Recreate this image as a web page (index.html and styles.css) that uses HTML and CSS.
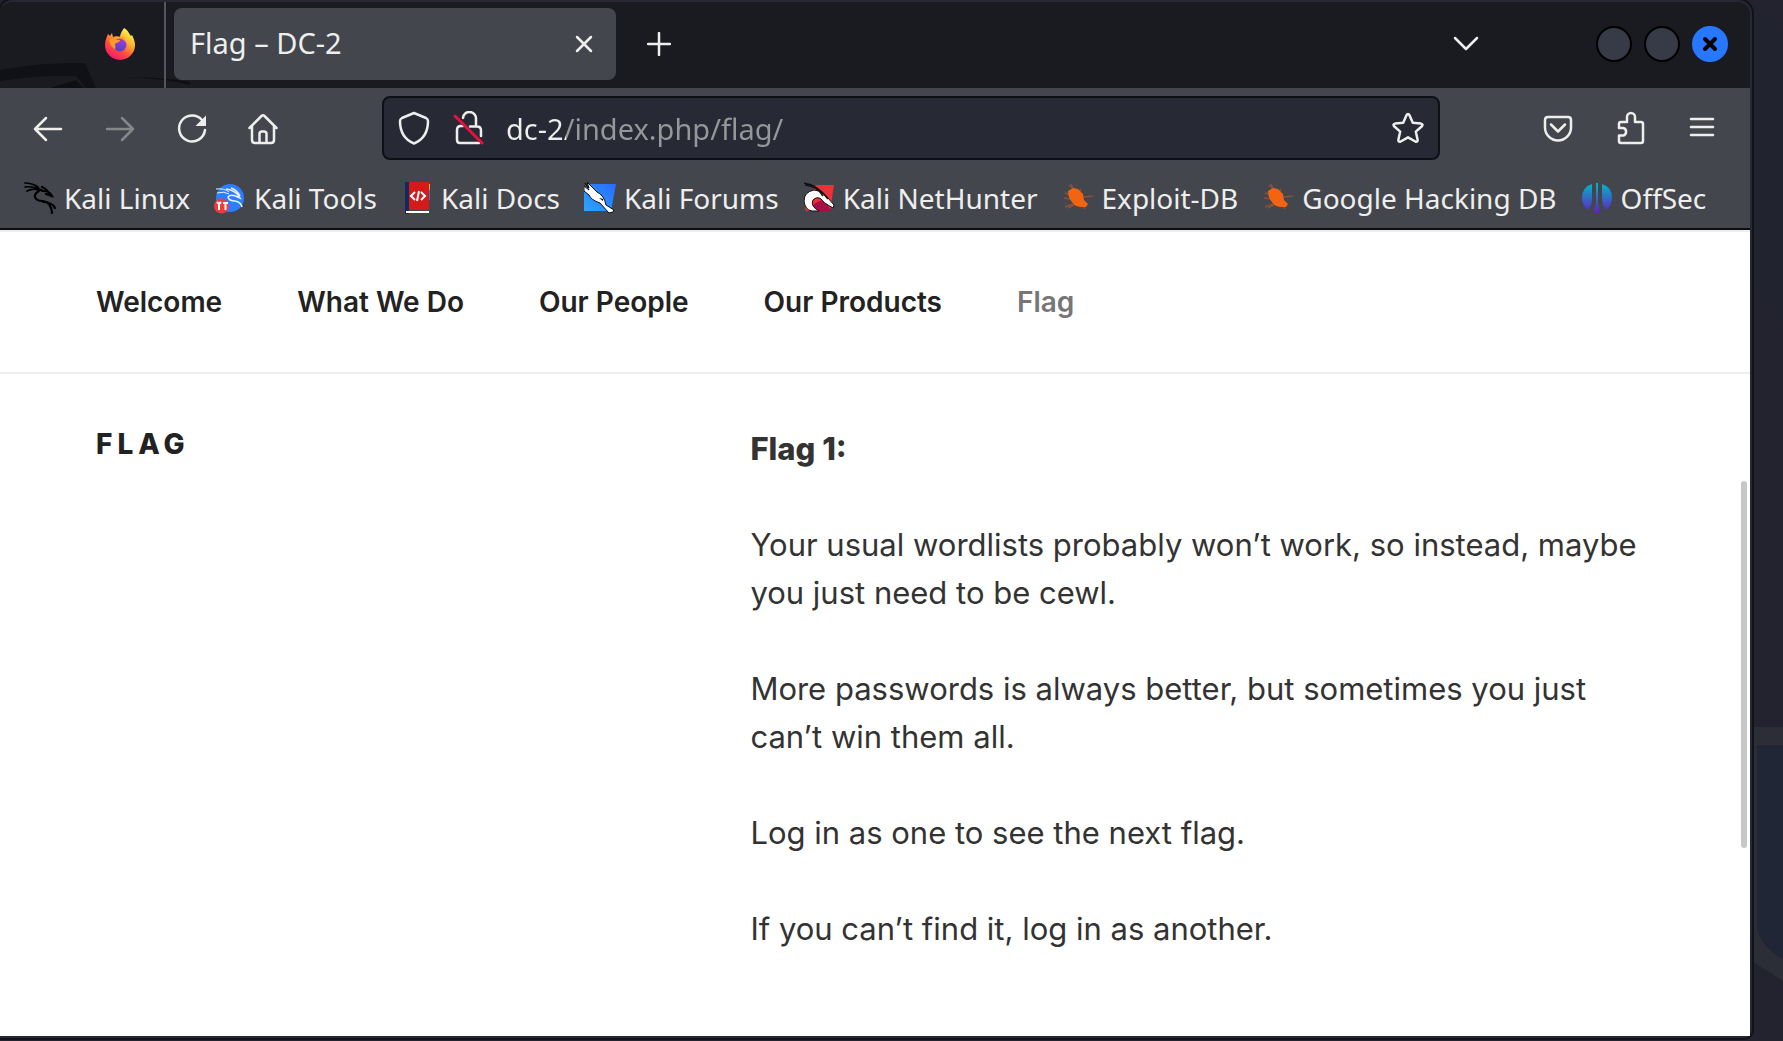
FILE: index.html
```html
<!DOCTYPE html>
<html lang="en">
<head>
<meta charset="utf-8">
<title>Flag – DC-2</title>
<link rel="stylesheet" href="styles.css">
</head>
<body>
<svg class="wallpaper" viewBox="0 0 60 1041" aria-hidden="true">
  <path d="M24 0 60 30V330L24 250z" fill="#21232f"/>
  <path d="M30 727H60V745H34V930Q42 950 60 959V981L30 962z" fill="#2b2d37"/>
  <path d="M34 746H60V958Q42 950 34 930z" fill="#212637"/>
</svg>
<div class="window">
  <header class="titlebar">
    <svg class="titlebar-art" viewBox="0 0 190 28" aria-hidden="true">
      <path d="M0 10Q40 2 85 3L96 28H86L76 16Q40 15 0 21z" fill="#101116"/>
      <path d="M50 28 76 20 84 28zM125 17Q180 17 214 28H200Q175 19 125 17z" fill="#0e0f13"/>
    </svg>
    <div class="pinned">
      <svg class="firefox" width="30" height="32" viewBox="0 0 30 32" role="img" aria-label="Firefox">
        <defs>
          <linearGradient id="flame" x1=".85" y1=".1" x2=".3" y2="1">
            <stop offset="0" stop-color="#fff44f"/><stop offset=".35" stop-color="#ffb02e"/>
            <stop offset=".65" stop-color="#ff4f3c"/><stop offset="1" stop-color="#f5156c"/>
          </linearGradient>
          <linearGradient id="globe" x1=".7" y1="0" x2=".3" y2="1">
            <stop offset="0" stop-color="#a63bd8"/><stop offset="1" stop-color="#4c41c9"/>
          </linearGradient>
        </defs>
        <path d="M19 0c5 3 5 6 7 8l1-1c2 4 3 7 3 10a15 15 0 0 1-30 0C0 12 2 9 3 6l2 2 2-3 1 4c2-1 5-1 7 0 0-3 2-6 4-9z" fill="url(#flame)"/>
        <circle cx="15" cy="17" r="6.500" fill="url(#globe)"/>
        <path d="M12 9c4-1 8 0 8 4l-3-2zM4 12c3-2 6-1 8 0h3c0 3-4 2-5 4 0 2 1 3 0 5-3-1-5-5-6-9z" fill="#ff9a23"/>
      </svg>
    </div>
    <div class="tab">
      <span class="tab-title">Flag – DC-2</span>
      <button class="icon-button" aria-label="Close tab">
        <svg width="18" height="18" viewBox="0 0 18 18"><path d="M2 2l14 14m0-14l-14 14"/></svg>
      </button>
    </div>
    <button class="icon-button new-tab" aria-label="New tab">
      <svg width="24" height="24" viewBox="0 0 24 24"><path d="M12 1v22M1 12h22"/></svg>
    </button>
    <button class="icon-button tab-list" aria-label="List all tabs">
      <svg width="26" height="16" viewBox="0 0 26 16"><path d="M2 2l11 11L24 2"/></svg>
    </button>
    <div class="window-controls">
      <button class="control" aria-label="Minimize"></button>
      <button class="control" aria-label="Maximize"></button>
      <button class="control control-close" aria-label="Close">
        <svg width="16" height="16" viewBox="0 0 16 16"><path d="M3 3l10 10m0-10L3 13"/></svg>
      </button>
    </div>
  </header>

  <div class="toolbar">
    <div class="nav-buttons">
      <button class="icon-button" aria-label="Back">
        <svg width="32" height="34" viewBox="0 0 32 34"><path d="M29 18H3M14 7L3 18l11 11"/></svg>
      </button>
      <button class="icon-button" aria-label="Forward" disabled>
        <svg width="32" height="34" viewBox="0 0 32 34"><path d="M3 18h26M18 7l11 11-11 11"/></svg>
      </button>
      <button class="icon-button" aria-label="Reload">
        <svg width="32" height="34" viewBox="0 0 32 34"><path d="M26 9A13 13 0 1 0 29 19"/><path class="solid" d="M30 4.500V15H19.500z"/></svg>
      </button>
      <button class="icon-button" aria-label="Home">
        <svg width="32" height="34" viewBox="0 0 32 34"><path d="M1.500 17L13.500 5q1.500-1.500 3 0L28.500 17M4 15v14q0 3 3 3h16q3 0 3-3V15M11.500 32v-9q0-2.500 2.500-2.500h2q2.500 0 2.500 2.500v9"/></svg>
      </button>
    </div>
    <div class="urlbar">
      <button class="icon-button" aria-label="Tracking protection">
        <svg width="32" height="34" viewBox="0 0 32 34"><path d="M16 2L28 7q2 1 2 3C30 20 27 28 16 32.500 5 28 2 20 2 10q0-2 2-3z"/></svg>
      </button>
      <button class="icon-button" aria-label="Connection not secure">
        <svg width="32" height="34" viewBox="0 0 32 34"><path d="M11 7a6.500 6.500 0 0 1 13 1v7M11 15H9q-4 0-4 4v10q0 3 3 3h19M18 15.500h7q4 0 4 4V25"/><path class="strike" d="M3 5l27 27"/></svg>
      </button>
      <input class="url" type="text" value="dc-2/index.php/flag/" aria-label="Address">
      <button class="icon-button" aria-label="Bookmark this page">
        <svg width="32" height="34" viewBox="0 0 32 34"><path d="M14.500 4.200q1.500-2.400 3 0l3.300 7.600 8.200.8q2.500.6.900 2.600l-6.100 5.400 1.800 8.200q.2 2.500-2.300 1.700L16 26.300l-7.300 4.200q-2.500.8-2.300-1.700l1.800-8.200-6.100-5.400q-1.600-2 .9-2.600l8.200-.8z"/></svg>
      </button>
    </div>
    <div class="tool-buttons">
      <button class="icon-button" aria-label="Save to Pocket">
        <svg width="32" height="34" viewBox="0 0 32 34"><path d="M6 6h20q3 0 3 3v7.500a13 13 0 0 1-26 0V9q0-3 3-3zM9 13.500l7 7 7-7"/></svg>
      </button>
      <button class="icon-button" aria-label="Extensions">
        <svg width="32" height="34" viewBox="0 0 32 34"><path d="M5 17v-4q0-2 2-2h6V6a4 4 0 0 1 8 0v5h6q2 0 2 2v17q0 2-2 2H7q-2 0-2-2v-5.500h4.500a4 4 0 0 0 0-7.500z"/></svg>
      </button>
      <button class="icon-button" aria-label="Open menu">
        <svg width="32" height="34" viewBox="0 0 32 34"><path d="M5 8h22M5 16h22M5 24h22"/></svg>
      </button>
    </div>
  </div>

  <nav class="bookmarks" aria-label="Bookmarks">
    <a href="#linux">
      <svg width="32" height="32" viewBox="0 0 32 32" aria-hidden="true"><g fill="none" stroke="#000" stroke-linecap="round"><path stroke-width="1.700" d="M1 1q7 0 13 4M1 5q7-1 13 2M3 9q6-3 12-1"/><path stroke-width="2.200" d="M12 4l4 4q-6 4-5 7 1 4 8 4 8 1 9 12M19 20q9 0 12 6M12 7q4 0 7 2 7 0 9 5l-6-2M18 5q5 2 9 9"/></g></svg>
      Kali Linux</a>
    <a href="#tools">
      <svg width="32" height="32" viewBox="0 0 32 32" aria-hidden="true"><circle cx="16" cy="16" r="14" fill="#2b7fff"/><g fill="none" stroke="#e8f1ff"><path d="M2 7q8-1 13 3M3 11q7-2 12 1"/><path stroke-width="1.500" d="M12 7q10 1 14 9-9-5-12-1 1 4 7 4 6 1 7 6M17 6q6 2 9 8"/></g><circle cx="7.500" cy="24" r="7.500" fill="#f23b3f"/><path d="M3 20l2 2v6m0-6l2-2M9 21h5m-2.500 0v7" fill="none" stroke="#fff" stroke-width="2"/></svg>
      Kali Tools</a>
    <a href="#docs">
      <svg width="32" height="32" viewBox="0 0 32 32" aria-hidden="true"><path d="M27 2h2v6h-2z" fill="#e8a33c"/><path d="M27 8h2v10h-2z" fill="#3978b8"/><path d="M4 0h24v28H4z" fill="#d51a1c"/><path d="M4 0h4v32H4z" fill="#102a5c"/><path d="M5 29h23v2H5z" fill="#fff"/><path d="M14 10l-4 4 4 4m6-8l4 4-4 4m-2-9l-2 10" fill="none" stroke="#fff" stroke-width="2"/></svg>
      Kali Docs</a>
    <a href="#forums">
      <svg width="32" height="32" viewBox="0 0 32 32" aria-hidden="true"><defs><linearGradient id="sky" x1="1" y1="0" x2="0" y2="1"><stop offset="0" stop-color="#286bff"/><stop offset="1" stop-color="#2ca5ff"/></linearGradient></defs><path d="M6 2h26l-5 27H0V6z" fill="url(#sky)"/><path d="M1 1l4 5-2-6 10 10q7 3 9 13l8 5-1 2-4 1-9-10q-9-3-11-8L0 9V4l5 4z" fill="#fff" stroke="#0b0d14"/><path d="M15 16l4 1v2z"/></svg>
      Kali Forums</a>
    <a href="#nethunter">
      <svg width="32" height="32" viewBox="0 0 32 32" aria-hidden="true"><path d="M13 3h18l-4 26H3q-2-4-1-9z" fill="#ef3038"/><path d="M6 29q6-11 16-11l6 11z" fill="#a80f45"/><path d="M16 29Q7 24 10 18q4-4 8-1 3 4 7 6l5 3 1-3-6-7q-5-7-14-8Q1 10 1 19q1 9 8 10z" fill="#fff" stroke="#111"/><path d="M1 1q14 2 24 16M2 3q12 1 18 11" fill="none" stroke="#111" stroke-width="1.500"/></svg>
      Kali NetHunter</a>
    <a href="#exploit">
      <svg width="32" height="32" viewBox="0 0 32 32" aria-hidden="true"><g id="bug"><path d="M9 2l3 6M3 11l7 2M2 16l6 1M19 7l-3 5M31 14l-9 1M3 25q7-4 13-2M12 23l-6 3M20 22l3 5M7 3l10 9" fill="none" stroke="#8a5038" stroke-width="1.500"/><path d="M6 9l5-3 5 1 5 5 1 6 4 4-2 3h-6q-6-1-8-5-4-4-4-11z" fill="#f26411"/></g></svg>
      Exploit-DB</a>
    <a href="#hacking">
      <svg width="32" height="32" viewBox="0 0 32 32" aria-hidden="true"><use href="#bug"/></svg>
      Google Hacking DB</a>
    <a href="#offsec">
      <svg width="32" height="32" viewBox="0 0 32 32" aria-hidden="true"><defs><linearGradient id="off" gradientUnits="userSpaceOnUse" x1="0" y1="1" x2="0" y2="31"><stop offset="0" stop-color="#00b9c6"/><stop offset="1" stop-color="#641dc8"/></linearGradient></defs><path d="M11 2v15q0 6-4 11-6-5-6-12Q1 5 11 2zM21 2v15q0 6 4 11 6-5 6-12Q31 5 21 2zM15 1h2v20l2 10h-6l2-10z" fill="url(#off)"/></svg>
      OffSec</a>
  </nav>

  <div class="page">
    <nav class="site-nav" aria-label="Site">
      <a href="#welcome">Welcome</a>
      <a href="#what-we-do">What We Do</a>
      <a href="#our-people">Our People</a>
      <a href="#our-products">Our Products</a>
      <a href="#flag" aria-current="page">Flag</a>
    </nav>
    <main class="entry">
      <h1>Flag</h1>
      <div class="entry-content">
        <p><strong>Flag 1:</strong></p>
        <p>Your usual wordlists probably won’t work, so instead, maybe you just need to be cewl.</p>
        <p>More passwords is always better, but sometimes you just can’t win them all.</p>
        <p>Log in as one to see the next flag.</p>
        <p>If you can’t find it, log in as another.</p>
      </div>
    </main>
    <div class="scroll-thumb"></div>
  </div>
</div>
</body>
</html>
```
FILE: styles.css
```css
* { box-sizing: border-box; }

body {
  margin: 0;
  min-height: 100vh;
  display: flex;
  background: #22232f;
  font-family: "Noto Sans", sans-serif;
  color: #eeeeec;
}

svg { display: block; flex: none; }
button { padding: 0; border: 0; background: none; color: inherit; }
a { color: inherit; text-decoration: none; }

.wallpaper {
  position: absolute;
  top: 0;
  right: 0;
  width: 60px;
  height: 100%;
}

.window {
  position: relative;
  flex: 1;
  display: flex;
  flex-direction: column;
  min-width: 0;
  margin: 0 31px 3px 0;
  border: solid #262833;
  border-width: 2px 2px 2px 0;
  border-radius: 12px 14px 8px 0;
  box-shadow: 0 0 0 2px #111218;
  background: #1a1b20;
}

/* Title bar */
.titlebar {
  position: relative;
  display: flex;
  align-items: center;
  height: 86px;
  padding: 0 22px 2px 0;
}

.titlebar-art {
  position: absolute;
  left: 0;
  bottom: 0;
  width: 190px;
  height: 28px;
}

.pinned {
  position: relative;
  align-self: stretch;
  display: flex;
  align-items: center;
  justify-content: flex-end;
  width: 166px;
  margin-bottom: -2px;
  padding: 0 29px 2px 0;
  border-right: 2px solid #54565c;
}

.tab {
  position: relative;
  display: flex;
  align-items: center;
  justify-content: space-between;
  width: 442px;
  height: 72px;
  margin-left: 8px;
  padding: 0 23px 0 16px;
  border-radius: 8px;
  background: #44464d;
  font-size: 29px;
}

.tab-title { line-height: 40px; padding-bottom: 2px; }

.icon-button svg {
  fill: none;
  stroke: currentColor;
  stroke-width: 2.500;
  stroke-linecap: round;
  stroke-linejoin: round;
}

.icon-button .solid { fill: currentColor; stroke: none; }
.icon-button .strike { stroke: #e8103f; stroke-width: 3; }
.icon-button:disabled { color: #85878b; }

.new-tab { margin-left: 31px; }
.tab-list { margin-left: auto; }

.window-controls {
  display: flex;
  gap: 12px;
  margin-left: 117px;
}

.control {
  display: grid;
  place-items: center;
  width: 36px;
  height: 36px;
  border: 2px solid #000;
  border-radius: 50%;
  background: #363b47;
}

.control-close { border-color: #2777ff; background: #2777ff; }
.control-close svg { stroke: #000; stroke-width: 4; stroke-linecap: round; }

/* Navigation toolbar */
.toolbar {
  display: flex;
  align-items: center;
  height: 80px;
  padding: 0 32px;
  background: #44464d;
}

.nav-buttons { display: flex; gap: 40px; }
.tool-buttons { display: flex; align-items: center; gap: 40px; }

.urlbar {
  flex: 1;
  display: flex;
  align-items: center;
  gap: 22px;
  min-width: 0;
  height: 64px;
  margin: 0 102px;
  padding: 0 14px;
  border: 2px solid #0f1016;
  border-radius: 8px;
  background: #272935;
}

.url {
  flex: 1;
  min-width: 0;
  height: 44px;
  padding: 0;
  border: 0;
  outline: 0;
  font: 29px "Noto Sans", sans-serif;
  color: transparent;
  background: linear-gradient(90deg, #eeeeec 60px, #96979b 60px);
  background-clip: text;
}

/* Bookmarks */
.bookmarks {
  display: flex;
  gap: 24px;
  height: 62px;
  padding: 0 24px;
  border-bottom: 2px solid #0d0e14;
  background: #44464d;
  font-size: 28px;
  white-space: nowrap;
  overflow: hidden;
}

.bookmarks a { display: flex; align-items: center; gap: 8px; }

/* Web page */
.page {
  position: relative;
  flex: 1;
  border-top: 2px solid #eee;
  background: #fff;
  font-family: Inter, sans-serif;
}

.site-nav {
  display: flex;
  align-items: center;
  gap: 75px;
  height: 142px;
  padding: 0 96px;
  border-bottom: 2px solid #eee;
  color: #222;
  font-size: 28px;
  font-weight: 600;
}

.site-nav [aria-current] { color: #767676; }

.entry {
  display: flex;
  justify-content: space-between;
  padding: 51px 96px 32px;
}

h1 {
  margin: 0;
  color: #222;
  font-size: 28px;
  font-weight: 800;
  line-height: 38px;
  letter-spacing: 5px;
  text-transform: uppercase;
}

.entry-content {
  width: 58%;
  color: #333;
  font-size: 31px;
  line-height: 48px;
}

.entry-content p { margin: 0 0 48px; }
.entry-content strong { font-weight: 800; }

.scroll-thumb {
  position: absolute;
  top: 31%;
  right: 3px;
  width: 6px;
  height: 45.600%;
  border-radius: 3px;
  background: #c6c7c6;
}
```
